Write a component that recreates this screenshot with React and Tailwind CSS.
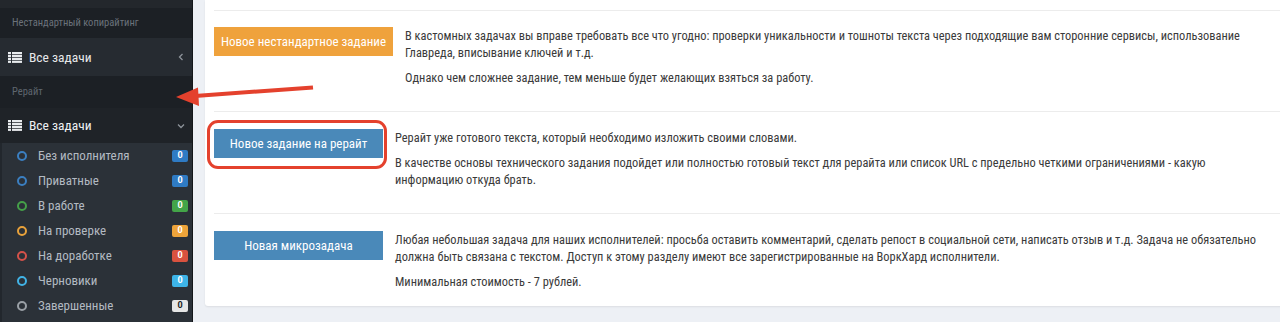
import React from 'react';

const FONT = { fontFamily: '"Roboto Condensed", Roboto, sans-serif' };

const subItems = [
  { label: 'Без исполнителя', ring: 'border-[#3b7fc1]', badge: 'bg-[#2f7bc4] text-white' },
  { label: 'Приватные', ring: 'border-[#3b7fc1]', badge: 'bg-[#2f7bc4] text-white' },
  { label: 'В работе', ring: 'border-[#45a049]', badge: 'bg-[#43a548] text-white' },
  { label: 'На проверке', ring: 'border-[#e9a23b]', badge: 'bg-[#eea43a] text-white' },
  { label: 'На доработке', ring: 'border-[#d4524a]', badge: 'bg-[#d9523f] text-white' },
  { label: 'Черновики', ring: 'border-[#41b3e6]', badge: 'bg-[#3db4e8] text-white' },
  { label: 'Завершенные', ring: 'border-[#9aa0a6]', badge: 'bg-[#e6e6e6] text-[#222]' },
];

function ListIcon() {
  return (
    <svg width="14" height="11" viewBox="0 0 14 11" className="shrink-0">
      <g fill="#e9ecef">
        <rect x="0" y="0" width="3" height="2.2" />
        <rect x="4" y="0" width="10" height="2.2" />
        <rect x="0" y="2.9" width="3" height="2.2" />
        <rect x="4" y="2.9" width="10" height="2.2" />
        <rect x="0" y="5.8" width="3" height="2.2" />
        <rect x="4" y="5.8" width="10" height="2.2" />
        <rect x="0" y="8.7" width="3" height="2.2" />
        <rect x="4" y="8.7" width="10" height="2.2" />
      </g>
    </svg>
  );
}

function Chevron({ dir }) {
  return (
    <svg width="8" height="8" viewBox="0 0 8 8" className="shrink-0">
      {dir === 'left' ? (
        <path d="M5.5 1 L2.5 4 L5.5 7" fill="none" stroke="#8d939a" strokeWidth="1.3" />
      ) : (
        <path d="M1 2.5 L4 5.5 L7 2.5" fill="none" stroke="#8d939a" strokeWidth="1.3" />
      )}
    </svg>
  );
}

function Sidebar() {
  return (
    <aside className="w-[193px] shrink-0 flex flex-col bg-[#1c2025] border-r border-[#14171a]">
      <div className="h-[8px] bg-[#23272c]" />
      <div className="h-[30px] flex items-center pl-[12px] text-[10.5px] text-[#6b727b]">
        Нестандартный копирайтинг
      </div>
      <div className="h-[38px] flex items-center pl-[8px] pr-[7px] bg-[#262b31]">
        <ListIcon />
        <span className="ml-[7px] flex-1 text-[13.5px] text-[#e6e8ea]">Все задачи</span>
        <Chevron dir="left" />
      </div>
      <div className="h-[32px] flex items-center pl-[12px] text-[10.5px] text-[#5f666f]">Рерайт</div>
      <div className="h-[35px] flex items-center pl-[8px] pr-[7px] bg-[#1f2328]">
        <ListIcon />
        <span className="ml-[7px] flex-1 text-[13.5px] text-[#eef0f2]">Все задачи</span>
        <Chevron dir="down" />
      </div>
      <ul className="flex-1 bg-[#2b3138] border-l-[2px] border-[#22272d]">
        {subItems.map((item) => (
          <li key={item.label} className="h-[25px] flex items-center pl-[15px] pr-[4px]">
            <span className={`w-[10px] h-[10px] rounded-full border-2 ${item.ring}`} />
            <span className="ml-[11px] flex-1 text-[13px] text-[#b3bac2]">{item.label}</span>
            <span
              className={`w-[16px] h-[12px] rounded-[2px] flex items-center justify-center text-[9px] font-bold ${item.badge}`}
              style={{ fontFamily: 'Roboto, sans-serif' }}
            >
              0
            </span>
          </li>
        ))}
      </ul>
    </aside>
  );
}

function TaskRow({ button, color, width, paragraphs, height, top, outlined }) {
  return (
    <div className={`flex items-start gap-[12px] border-t border-[#ececec] ${height} ${top}`}>
      <div className="relative shrink-0">
        <button
          className={`${width} h-[29px] text-[13px] text-white whitespace-nowrap ${color} flex items-center justify-center`}
        >
          {button}
        </button>
        {outlined && (
          <span className="absolute left-[-7px] top-[-9px] right-[-4px] bottom-[-11px] border-[3px] border-[#e4412d] rounded-[11px]" />
        )}
      </div>
      <div className="text-[12.4px] leading-[17px] text-[#3a3a3a]">
        {paragraphs.map((p, i) => (
          <p key={i} className="mb-[8px] whitespace-nowrap">
            {p.map((line, j) => (
              <React.Fragment key={j}>
                {j > 0 && <br />}
                {line}
              </React.Fragment>
            ))}
          </p>
        ))}
      </div>
    </div>
  );
}

export default function App() {
  return (
    <div className="relative w-[1280px] h-[322px] overflow-hidden flex bg-[#edf0f5]" style={FONT}>
      <Sidebar />
      <main className="flex-1 min-w-0 pl-[12px] pb-[16px]">
        <div className="h-full w-[1120px] bg-white rounded-bl-[3px] shadow-[0_1px_2px_rgba(0,0,0,0.08)] pt-[10px] pl-[9px]">
          <TaskRow
            button="Новое нестандартное задание"
            color="bg-[#efa23c]"
            width="w-[179px]"
            height="h-[101px]"
            top="pt-[16px]"
            paragraphs={[
              [
                'В кастомных задачах вы вправе требовать все что угодно: проверки уникальности и тошноты текста через подходящие вам сторонние сервисы, использование',
                'Главреда, вписывание ключей и т.д.',
              ],
              ['Однако чем сложнее задание, тем меньше будет желающих взяться за работу.'],
            ]}
          />
          <TaskRow
            button="Новое задание на рерайт"
            color="bg-[#4a89b9]"
            width="w-[169px]"
            height="h-[102px]"
            top="pt-[17px]"
            outlined
            paragraphs={[
              ['Рерайт уже готового текста, который необходимо изложить своими словами.'],
              [
                'В качестве основы технического задания подойдет или полностью готовый текст для рерайта или список URL с предельно четкими ограничениями - какую',
                'информацию откуда брать.',
              ],
            ]}
          />
          <TaskRow
            button="Новая микрозадача"
            color="bg-[#4a89b9]"
            width="w-[169px]"
            height="h-[93px]"
            top="pt-[17px]"
            paragraphs={[
              [
                'Любая небольшая задача для наших исполнителей: просьба оставить комментарий, сделать репост в социальной сети, написать отзыв и т.д. Задача не обязательно',
                'должна быть связана с текстом. Доступ к этому разделу имеют все зарегистрированные на ВоркХард исполнители.',
              ],
              ['Минимальная стоимость - 7 рублей.'],
            ]}
          />
        </div>
      </main>
      <svg className="absolute left-[170px] top-[80px]" width="150" height="32" viewBox="170 80 150 32">
        <line x1="195" y1="96" x2="313" y2="87.5" stroke="#e4412d" strokeWidth="4" />
        <polygon points="176,97 198,87.5 199,106" fill="#e4412d" />
      </svg>
    </div>
  );
}
